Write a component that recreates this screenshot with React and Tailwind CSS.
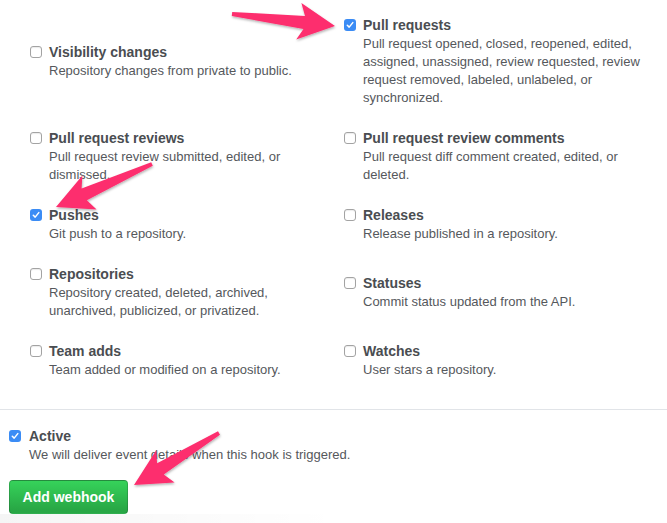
import React from "react";

function Checkbox({ checked }) {
  if (checked) {
    return (
      <div className="w-[12px] h-[12px] shrink-0 rounded-[3px] bg-[#3b8cf5] flex items-center justify-center">
        <svg width="8" height="8" viewBox="0 0 8 8">
          <path d="M1.3 4.3 L3.2 6.1 L6.8 1.6" fill="none" stroke="#fff" strokeWidth="1.5" strokeLinecap="round" strokeLinejoin="round" />
        </svg>
      </div>
    );
  }
  return (
    <div className="w-[12px] h-[12px] shrink-0 rounded-[3px] border border-[#a3a3a3] bg-white shadow-[inset_0_1px_1px_rgba(0,0,0,0.08)]" />
  );
}

function Item({ title, desc, checked }) {
  return (
    <div className="flex items-start gap-[7px] pr-[20px]">
      <div className="mt-[4px]">
        <Checkbox checked={checked} />
      </div>
      <div>
        <div className="text-[14px] leading-[20px] font-bold text-[#4a4d51]">{title}</div>
        <div className="text-[13px] leading-[18px] text-[#55585c]">{desc}</div>
      </div>
    </div>
  );
}

function arrowPoints(tx, ty, px, py) {
  const dx = px - tx;
  const dy = py - ty;
  const L = Math.hypot(dx, dy);
  const ux = dx / L;
  const uy = dy / L;
  const nx = -uy;
  const ny = ux;
  const pt = (u, v) => `${(tx + ux * u + nx * v).toFixed(1)},${(ty + uy * u + ny * v).toFixed(1)}`;
  return [
    pt(0, -2),
    pt(L - 31, -6.5),
    pt(L - 36, -19),
    pt(L, 0),
    pt(L - 37, 18),
    pt(L - 31, 6.5),
    pt(0, 2),
  ].join(" ");
}

const items = [
  ["Visibility changes", "Repository changes from private to public.", false],
  ["Pull requests", "Pull request opened, closed, reopened, edited, assigned, unassigned, review requested, review request removed, labeled, unlabeled, or synchronized.", true],
  ["Pull request reviews", "Pull request review submitted, edited, or dismissed.", false],
  ["Pull request review comments", "Pull request diff comment created, edited, or deleted.", false],
  ["Pushes", "Git push to a repository.", true],
  ["Releases", "Release published in a repository.", false],
  ["Repositories", "Repository created, deleted, archived, unarchived, publicized, or privatized.", false],
  ["Statuses", "Commit status updated from the API.", false],
  ["Team adds", "Team added or modified on a repository.", false],
  ["Watches", "User stars a repository.", false],
];

export default function App() {
  return (
    <div className="relative w-[667px] h-[523px] bg-white overflow-hidden font-['Liberation_Sans',Arial,sans-serif]">
      <div className="grid grid-cols-[314px_1fr] items-center gap-y-[21px] pl-[30px] pt-[15px]">
        {items.map(([t, d, c]) => (
          <Item key={t} title={t} desc={d} checked={c} />
        ))}
      </div>

      <div className="mt-[30px] border-t border-[#e1e4e8] pl-[9px] pt-[16px]">
        <div className="flex items-start gap-[8px]">
          <div className="mt-[4px]">
            <Checkbox checked />
          </div>
          <div>
            <div className="text-[14px] leading-[20px] font-bold text-[#4a4d51]">Active</div>
            <div className="text-[13px] leading-[18px] text-[#55585c]">
              We will deliver event details when this hook is triggered.
            </div>
          </div>
        </div>
        <button className="mt-[16px] w-[119px] h-[34px] rounded-[4px] border border-[rgba(27,31,35,0.2)] bg-[linear-gradient(180deg,#36d25a_0%,#28a745_90%)] text-white text-[14px] font-bold leading-none">
          Add webhook
        </button>
      </div>

      <div className="absolute left-0 bottom-0 w-[340px] h-[9px] bg-[linear-gradient(90deg,rgba(0,0,0,0.04),rgba(0,0,0,0))]" />

      <svg className="absolute inset-0 pointer-events-none" width="667" height="523">
        <defs>
          <filter id="sh" x="-20%" y="-20%" width="140%" height="140%">
            <feDropShadow dx="0.5" dy="1.5" stdDeviation="1.2" floodColor="#000" floodOpacity="0.3" />
          </filter>
        </defs>
        <g fill="#fd2e6e" filter="url(#sh)">
          <polygon points={arrowPoints(232, 14, 335, 26)} />
          <polygon points={arrowPoints(152, 164, 56, 207)} />
          <polygon points={arrowPoints(219, 433, 134, 485)} />
        </g>
      </svg>
    </div>
  );
}
